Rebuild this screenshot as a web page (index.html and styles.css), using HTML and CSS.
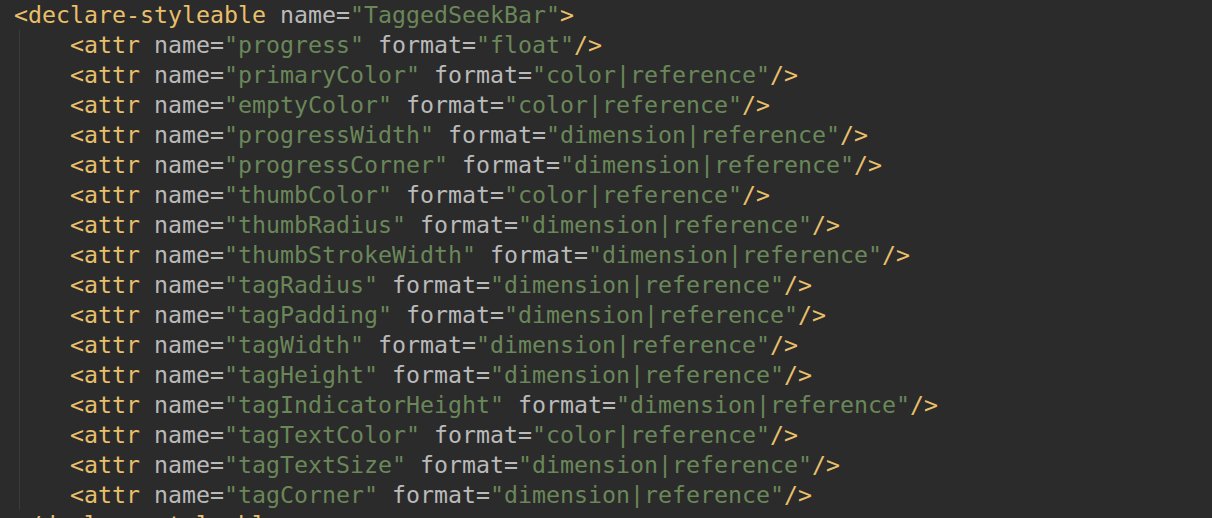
FILE: index.html
```html
<!DOCTYPE html>
<html>
<head>
<meta charset="utf-8">
<link rel="stylesheet" href="styles.css">
</head>
<body>
<div class="code">
<div class="line"><span class="t">&lt;declare-styleable</span> <span class="a">name=</span><span class="v">"TaggedSeekBar"</span><span class="t">&gt;</span></div>
<div class="block">
<div class="line"><span class="t">&lt;attr</span> <span class="a">name=</span><span class="v">"progress"</span> <span class="a">format=</span><span class="v">"float"</span><span class="t">/&gt;</span></div>
<div class="line"><span class="t">&lt;attr</span> <span class="a">name=</span><span class="v">"primaryColor"</span> <span class="a">format=</span><span class="v">"color|reference"</span><span class="t">/&gt;</span></div>
<div class="line"><span class="t">&lt;attr</span> <span class="a">name=</span><span class="v">"emptyColor"</span> <span class="a">format=</span><span class="v">"color|reference"</span><span class="t">/&gt;</span></div>
<div class="line"><span class="t">&lt;attr</span> <span class="a">name=</span><span class="v">"progressWidth"</span> <span class="a">format=</span><span class="v">"dimension|reference"</span><span class="t">/&gt;</span></div>
<div class="line"><span class="t">&lt;attr</span> <span class="a">name=</span><span class="v">"progressCorner"</span> <span class="a">format=</span><span class="v">"dimension|reference"</span><span class="t">/&gt;</span></div>
<div class="line"><span class="t">&lt;attr</span> <span class="a">name=</span><span class="v">"thumbColor"</span> <span class="a">format=</span><span class="v">"color|reference"</span><span class="t">/&gt;</span></div>
<div class="line"><span class="t">&lt;attr</span> <span class="a">name=</span><span class="v">"thumbRadius"</span> <span class="a">format=</span><span class="v">"dimension|reference"</span><span class="t">/&gt;</span></div>
<div class="line"><span class="t">&lt;attr</span> <span class="a">name=</span><span class="v">"thumbStrokeWidth"</span> <span class="a">format=</span><span class="v">"dimension|reference"</span><span class="t">/&gt;</span></div>
<div class="line"><span class="t">&lt;attr</span> <span class="a">name=</span><span class="v">"tagRadius"</span> <span class="a">format=</span><span class="v">"dimension|reference"</span><span class="t">/&gt;</span></div>
<div class="line"><span class="t">&lt;attr</span> <span class="a">name=</span><span class="v">"tagPadding"</span> <span class="a">format=</span><span class="v">"dimension|reference"</span><span class="t">/&gt;</span></div>
<div class="line"><span class="t">&lt;attr</span> <span class="a">name=</span><span class="v">"tagWidth"</span> <span class="a">format=</span><span class="v">"dimension|reference"</span><span class="t">/&gt;</span></div>
<div class="line"><span class="t">&lt;attr</span> <span class="a">name=</span><span class="v">"tagHeight"</span> <span class="a">format=</span><span class="v">"dimension|reference"</span><span class="t">/&gt;</span></div>
<div class="line"><span class="t">&lt;attr</span> <span class="a">name=</span><span class="v">"tagIndicatorHeight"</span> <span class="a">format=</span><span class="v">"dimension|reference"</span><span class="t">/&gt;</span></div>
<div class="line"><span class="t">&lt;attr</span> <span class="a">name=</span><span class="v">"tagTextColor"</span> <span class="a">format=</span><span class="v">"color|reference"</span><span class="t">/&gt;</span></div>
<div class="line"><span class="t">&lt;attr</span> <span class="a">name=</span><span class="v">"tagTextSize"</span> <span class="a">format=</span><span class="v">"dimension|reference"</span><span class="t">/&gt;</span></div>
<div class="line"><span class="t">&lt;attr</span> <span class="a">name=</span><span class="v">"tagCorner"</span> <span class="a">format=</span><span class="v">"dimension|reference"</span><span class="t">/&gt;</span></div>
</div>
<div class="line"><span class="t">&lt;/declare-styleable&gt;</span></div>
</div>
</body>
</html>
```
FILE: styles.css
```css
html, body {
  margin: 0;
  padding: 0;
  background: #2b2b2b;
  height: 100%;
  overflow: hidden;
}
.code {
  font-family: "DejaVu Sans Mono", "Liberation Mono", monospace;
  font-size: 23.25px;
  line-height: 30px;
  padding-left: 14px;
}
.line {
  height: 30px;
  white-space: pre;
}
.block {
  margin-left: 5px;
  border-left: 1px solid #3b3b3b;
  padding-left: 50px;
}
.t { color: #e8bf6a; }
.a { color: #bababa; }
.v { color: #6a8759; }
```
